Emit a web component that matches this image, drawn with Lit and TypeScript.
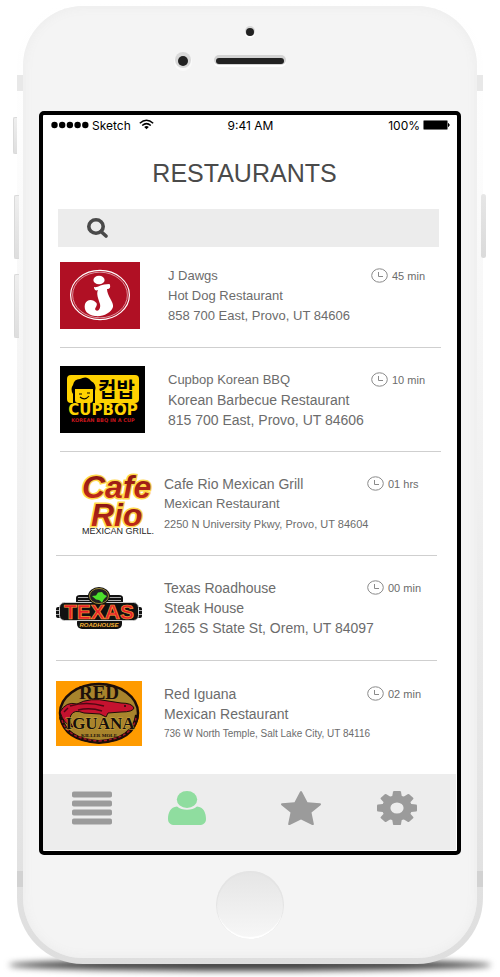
import { LitElement, html, css, svg } from "lit";
import { customElement } from "lit/decorators.js";
import { classMap } from "lit/directives/class-map.js";

const jDawgs = html`<svg class="logo" width="80" height="67" viewBox="0 0 80 67" role="img" aria-label="J Dawgs">
  <rect width="80" height="67" fill="#b01024" />
  <g fill="none" stroke="#fff">
    <ellipse cx="40" cy="33" rx="29.4" ry="24.6" stroke-width="1.2" />
    <ellipse cx="40" cy="33" rx="27.4" ry="22.8" stroke-width=".7" opacity=".8" />
  </g>
  <g fill="#fff">
    <ellipse cx="39" cy="18" rx="5.6" ry="4.3" />
    <path d="M34 25C38 26 40 22 49.500 22C51 25 50 27 47 27C47 34 54 40 53 45C51 51 43 55 35 54C27 53 23.500 48 25 42C27 37 33 37 36.500 41C38 44 34 46 35.500 48C38 50 41 47 40 42C38.500 37 36 32 38 28C36 29 34 28 34 25Z" />
  </g>
</svg>`;

const cupbop = html`<svg class="logo" width="85" height="67" viewBox="0 0 85 67" role="img" aria-label="Cupbop">
  <rect width="85" height="67" fill="#000" />
  <path d="M11 9H75Q79 9 79 13V33Q79 37 75 37H11Q7 37 7 33V13Q7 9 11 9Z" fill="#ffd200" />
  <path d="M13 37V28Q10 23 13 19Q14 13 20 13Q27 9 31 15Q37 18 35 25V37Z" fill="#000" />
  <path d="M15 23H33V34Q33 37 30 37H18Q15 37 15 34Z" fill="#ffd200" />
  <path d="M19 28h3M27 27h3M20 31Q25 35 29 30" fill="none" stroke="#000" stroke-width="1.200" />
  <text x="38" y="31" class="hangul" fill="#000">컵밥</text>
  <text x="43" y="49" class="cup" text-anchor="middle" fill="#ffd200">CUPBOP</text>
  <text x="43" y="56" class="tag" text-anchor="middle" fill="#c4161c">KOREAN BBQ IN A CUP</text>
</svg>`;

const cafeRio = html`<svg class="logo" width="78" height="62" viewBox="0 0 78 62" role="img" aria-label="Cafe Rio">
  <defs>
    <linearGradient id="ember" x1="0" y1="0" x2="0" y2="1">
      <stop offset="0" stop-color="#7c1212" /><stop offset="1" stop-color="#d2301a" />
    </linearGradient>
  </defs>
  <g class="brush" fill="url(#ember)" stroke="#ffd84a" stroke-width="3">
    <text x="2" y="25">Cafe</text>
    <text x="11" y="53">Rio</text>
  </g>
  <text x="38" y="61" class="grill" text-anchor="middle" fill="#222">MEXICAN GRILL.</text>
</svg>`;

const texas = html`<svg class="logo" width="86" height="42" viewBox="0 0 86 42" role="img" aria-label="Texas Roadhouse">
  <path d="M20 16V11Q20 8 24 8H63Q67 8 67 11V16Z" fill="#111" />
  <path d="M22 10.500H65M22 13.500H65" stroke="#aaa" />
  <rect x="0" y="20" width="86" height="11" rx="2" fill="#111" />
  <path d="M0 23.500H86M0 27.500H86" stroke="#aaa" />
  <rect x="21" y="30" width="45" height="12" rx="5" fill="#111" />
  <rect x="3.500" y="15.500" width="79" height="18" rx="5" fill="#111" stroke="#ccc" />
  <ellipse cx="43" cy="9" rx="11" ry="9" fill="#111" />
  <ellipse cx="43" cy="9" rx="9.500" ry="7.600" fill="#222" stroke="#b9a13c" stroke-width=".8" />
  <path d="M36 9L40 8.500L42 5.500L46 5L48 7.500L51 9L48 12L46 15.500L43 13L40 12.500Z" fill="#4be02c" />
  <text x="43" y="32" class="texas" text-anchor="middle" fill="#e8202a" stroke="#f6a13a" stroke-width=".7">TEXAS</text>
  <text x="43" y="40" class="road" text-anchor="middle" fill="#f7b234">ROADHOUSE</text>
</svg>`;

const redIguana = html`<svg class="logo" width="86" height="65" viewBox="0 0 86 65" role="img" aria-label="Red Iguana">
  <rect width="86" height="65" fill="#ff9b00" />
  <ellipse cx="43" cy="32" rx="39" ry="29" fill="#a8842c" stroke="#1c0d08" stroke-width="2.500" />
  <path d="M5 36Q9 59 43 61Q78 59 81 34" fill="none" stroke="#1c0d08" stroke-width="4" />
  <path d="M6 39Q11 58 43 60Q76 58 80 37" fill="none" stroke="#a3142a" stroke-width="1.500" stroke-dasharray="3 2" />
  <text x="43" y="18" class="red" text-anchor="middle" fill="#1c100a">RED</text>
  <path d="M4 31Q10 20 21 23Q34 16 52 20L65 22Q76 22 78 27Q77 31 65 31L52 32L50 36L44 33L28 32Q18 28 15 34Q12 40 17 46Q8 44 4 31Z" fill="#c5122f" stroke="#1c0d08" />
  <path d="M14 25Q30 20 48 25M22 29Q34 26 46 30M8 31L12 27" fill="none" stroke="#4d0712" stroke-width="1.500" />
  <circle cx="69" cy="25" r="1" fill="#1c0d08" />
  <text x="44" y="48" class="iguana" text-anchor="middle" fill="#15100c" stroke="#cda43c" stroke-width="1">IGUANA</text>
  <text x="43" y="56" class="killer" text-anchor="middle" fill="#1c100a">KILLER MOLE</text>
</svg>`;

interface Place {
  name: string;
  kind: string;
  address: string;
  wait: string;
  logo: unknown;
  text: string;
}

const places: Place[] = [
  { name: "J Dawgs", kind: "Hot Dog Restaurant", address: "858 700 East, Provo, UT 84606", wait: "45 min", logo: jDawgs, text: "small" },
  { name: "Cupbop Korean BBQ", kind: "Korean Barbecue Restaurant", address: "815 700 East, Provo, UT 84606", wait: "10 min", logo: cupbop, text: "small-name" },
  { name: "Cafe Rio Mexican Grill", kind: "Mexican Restaurant", address: "2250 N University Pkwy, Provo, UT 84604", wait: "01 hrs", logo: cafeRio, text: "small-kind" },
  { name: "Texas Roadhouse", kind: "Steak House", address: "1265 S State St, Orem, UT 84097", wait: "00 min", logo: texas, text: "regular" },
  { name: "Red Iguana", kind: "Mexican Restaurant", address: "736 W North Temple, Salt Lake City, UT 84116", wait: "02 min", logo: redIguana, text: "tiny-address" },
];

const gearTeeth = [0, 45, 90, 135, 180, 225, 270, 315].map(
  (angle) => svg`<path d="M-5 -12L-4 -19Q-3.800 -20 -2.800 -20H2.800Q3.800 -20 4 -19L5 -12Z" transform="rotate(${angle})" />`,
);

@customElement("app-root")
export class AppRoot extends LitElement {
  static styles = css`
    :host {
      display: block;
      font-family: "Liberation Sans", Arial, sans-serif;
      color: #6c6c6c;
      background: #fff;
    }
    * { box-sizing: border-box; }
    .stage {
      padding: 0 17px 13px;
      overflow: hidden;
    }
    .phone {
      position: relative;
      z-index: 0;
    }
    .shadow {
      position: absolute;
      z-index: -2;
      left: -8px;
      right: -8px;
      bottom: -7px;
      height: 12px;
      border-radius: 50%;
      background: #444;
      filter: blur(3px);
    }
    .shell {
      position: relative;
      padding: 6px;
      border-radius: 66px;
      background: linear-gradient(#fff 0%, #fdfdfd 15%, #dedede 100%);
    }
    .band {
      position: absolute;
      left: 0;
      right: 0;
      height: 16px;
      background: #e8e8e8;
    }
    .band.top { top: 75px; }
    .band.bottom { bottom: 77px; background: #d2d2d2; }
    .key {
      position: absolute;
      z-index: 1;
      width: 5px;
      height: 64px;
      border: 1px solid #dadada;
      border-right-width: 0;
      border-radius: 2px 0 0 2px;
      background: linear-gradient(#efefef, #dedede);
    }
    .mute { left: -4px; top: 117px; width: 4px; height: 37px; }
    .up { left: -3px; top: 195px; }
    .down { left: -3px; top: 274px; }
    .power {
      right: -3px;
      top: 194px;
      border: 0;
      border-radius: 3px;
      background: linear-gradient(#e6e6e6, #dadada);
    }
    .face {
      position: relative;
      padding: 0 16px 19px;
      border-radius: 60px;
      background: #f4f4f4;
      box-shadow: inset 0 0 12px #ebebeb;
    }
    .sensors {
      height: 105px;
      padding-top: 20px;
      display: grid;
      grid-template-columns: 1fr 74px 1fr;
      grid-template-rows: 12px 1fr;
      row-gap: 14px;
      align-items: start;
    }
    .lens, .camera, .speaker {
      background: #222;
      border-radius: 8px;
    }
    .camera {
      grid-column: 2;
      justify-self: center;
      width: 8px;
      height: 8px;
      margin-top: 2px;
      box-shadow: 0 -1px 0 1px #d6d6d6, 0 1px 0 1px #fff;
    }
    .lens {
      grid-row: 2;
      justify-self: end;
      width: 10px;
      height: 10px;
      margin: 4px 25px 0 0;
      box-shadow: 0 -1px 0 3px #d9d9d9, 0 1px 0 4px #fafafa;
    }
    .speaker {
      grid-area: 2 / 2;
      height: 6px;
      margin: 6px 3px 0;
      box-shadow: 0 -1px 0 2px #d3d3d3, 0 1px 0 2px #fff;
    }
    .screen {
      border: 4px solid #000;
      border-radius: 5px;
      background: #fff;
      padding: 0 1px 1px 0;
    }
    .status {
      display: grid;
      grid-template-columns: 1fr auto 1fr;
      align-items: center;
      height: 22px;
      padding: 0 6px 0 8px;
      font: 12px/20px Inter, "Open Sans", sans-serif;
      color: #000;
    }
    .status svg { margin-bottom: 2px; }
    .carrier, .power-level {
      display: flex;
      align-items: center;
      gap: 3px;
    }
    .carrier .wifi { margin-left: 5px; }
    .power-level { justify-content: flex-end; }
    svg { display: block; flex: none; }
    h1 {
      margin: 21px 10px 21px 0;
      font-size: 25px;
      line-height: 30px;
      font-weight: 400;
      text-align: center;
      color: #4a4a4a;
    }
    .search {
      display: flex;
      align-items: center;
      gap: 12px;
      height: 38px;
      margin: 0 17px 0 15px;
      padding: 0 12px 0 29px;
      background: #ececec;
    }
    .search input {
      flex: 1;
      min-width: 0;
      height: 30px;
      border: 0;
      outline: 0;
      background: transparent;
      font: 14px/20px "Liberation Sans", Arial, sans-serif;
      color: #4a4a4a;
    }
    ul {
      list-style: none;
      margin: 0;
      padding: 0;
    }
    .row {
      display: grid;
      grid-template-columns: 108px 1fr;
      align-items: center;
      margin: 0 15px 0 17px;
      padding: 18px 0;
      border-bottom: 1px solid #cfcfcf;
    }
    .row:first-child { padding-top: 15px; }
    .row.wide { margin: 0 19px 0 13px; }
    .row:nth-child(4) { padding-bottom: 19px; }
    .row:last-child {
      padding: 19px 0 27px;
      border-bottom: 0;
    }
    .thumb {
      display: flex;
      align-items: center;
      height: 67px;
    }
    .thumb.end {
      justify-content: flex-end;
      padding-right: 6px;
    }
    .logo { overflow: visible; }
    .info {
      min-width: 0;
      font-size: 14px;
      line-height: 20px;
      white-space: nowrap;
    }
    .info p, .info h2 {
      margin: 0;
      font-size: inherit;
      font-weight: 400;
    }
    .small, .small-name h2, .small-kind .kind { font-size: 13px; }
    .small-kind .address { font-size: 11px; }
    .tiny-address .address { font-size: 10px; }
    .head {
      display: flex;
      justify-content: space-between;
    }
    .wait {
      display: flex;
      align-items: center;
      gap: 4px;
      width: 70px;
      font-size: 11px;
    }
    .tabs {
      display: flex;
      justify-content: space-between;
      height: 76px;
      padding: 17px 39px 0 29px;
      background: #ededed;
    }
    .pair {
      display: flex;
      align-items: flex-start;
      gap: 56px;
    }
    button {
      padding: 0;
      border: 0;
      background: none;
      color: #9b9b9b;
      cursor: pointer;
    }
    button.current { color: #8fdd9f; }
    .home {
      display: block;
      width: 68px;
      height: 68px;
      margin: 16px auto 0;
      border-radius: 50%;
      background: linear-gradient(#e5e5e5, #f7f7f7);
      box-shadow: inset 0 1px 0 1px #e4e4e4, inset 0 -2px 1px #fff;
    }
    .hangul { font: 700 20px "Noto Sans CJK KR", sans-serif; }
    .cup { font: 700 15px "DejaVu Sans", sans-serif; }
    .tag { font: 700 5px "DejaVu Sans", sans-serif; }
    .brush { font: italic 700 32px "Liberation Sans", sans-serif; paint-order: stroke; }
    .grill { font: 9px "Liberation Sans", sans-serif; }
    .texas { font: 700 21px "Liberation Sans", sans-serif; }
    .road { font: italic 700 6px "Liberation Sans", sans-serif; }
    .red { font: 700 19px "Liberation Serif", serif; }
    .iguana { font: 700 17px "Liberation Serif", serif; paint-order: stroke; }
    .killer { font: 700 5px "Liberation Serif", serif; }
  `;

  private row(place: Place, index: number) {
    return html`<li class=${classMap({ row: true, wide: index > 1 })}>
      <div class=${classMap({ thumb: true, end: place.logo === cafeRio })}>${place.logo}</div>
      <div class="info ${place.text}">
        <div class="head">
          <h2>${place.name}</h2>
          <span class="wait">
            <svg width="17" height="15" viewBox="0 0 17 15" fill="none" stroke="#8a8a8a" aria-hidden="true">
              <ellipse cx="8.500" cy="7.500" rx="7.800" ry="6.700" />
              <path d="M7.500 4V8.500H12" />
            </svg>
            ${place.wait}
          </span>
        </div>
        <p class="kind">${place.kind}</p>
        <p class="address">${place.address}</p>
      </div>
    </li>`;
  }

  render() {
    return html`<div class="stage">
      <div class="phone">
        <div class="shadow"></div>
        <div class="shell">
          <div class="band top"></div>
          <div class="band bottom"></div>
          <div class="key mute"></div>
          <div class="key up"></div>
          <div class="key down"></div>
          <div class="key power"></div>
          <div class="face">
            <div class="sensors">
              <div class="camera"></div>
              <div class="lens"></div>
              <div class="speaker"></div>
            </div>
            <main class="screen">
              <div class="status">
                <span class="carrier">
                  <svg width="38" height="8" viewBox="0 0 38 8" aria-hidden="true">
                    ${[0, 1, 2, 3, 4].map((n) => svg`<circle cx=${3.5 + n * 7.7} cy="4" r="3.200" />`)}
                  </svg>
                  Sketch
                  <svg class="wifi" width="15" height="12" viewBox="0 0 15 12" fill="none" stroke="#000" stroke-width="1.500" aria-hidden="true">
                    <path d="M.8 4.200Q7.500 -1.800 14.200 4.200M3.200 6.500Q7.500 2.800 11.800 6.500" />
                    <path d="M5.200 8Q7.500 6.200 9.800 8L7.500 10.200Z" fill="#000" stroke="none" />
                  </svg>
                </span>
                <span>9:41 AM</span>
                <span class="power-level">
                  100%
                  <svg width="27" height="10" viewBox="0 0 27 10" aria-hidden="true">
                    <rect x=".5" y=".5" width="24" height="9" rx="1" stroke="#777" />
                    <path d="M25.500 3.500Q27 5 25.500 6.500Z" stroke="#000" />
                  </svg>
                </span>
              </div>
              <h1>RESTAURANTS</h1>
              <label class="search">
                <svg width="21" height="20" viewBox="0 0 21 20" fill="none" stroke="#4a4a4a" stroke-width="3.600" aria-hidden="true">
                  <ellipse cx="9" cy="8.500" rx="7.200" ry="6.700" />
                  <path d="M14 13.500L19 18" stroke-linecap="round" />
                </svg>
                <input type="search" aria-label="Search restaurants" />
              </label>
              <ul>${places.map((place, index) => this.row(place, index))}</ul>
              <nav class="tabs">
                <div class="pair">
                  <button aria-label="List">
                    <svg width="40" height="34" viewBox="0 0 40 34" fill="currentColor">
                      ${[0, 9, 18, 27].map((y) => svg`<rect y=${y + 0.5} width="40" height="6" rx="1.800" />`)}
                    </svg>
                  </button>
                  <button class="current" aria-label="Profile">
                    <svg width="38" height="34" viewBox="0 0 38 34" fill="currentColor">
                      <ellipse cx="19" cy="8.500" rx="10.200" ry="8.500" />
                      <path d="M9 15.500Q13 18.700 19 18.700T29 15.500C35.500 15.800 38 22 38 28C38 32 35 34 31.500 34H6.500C3 34 0 32 0 28C0 22 2.500 15.800 9 15.500Z" />
                    </svg>
                  </button>
                </div>
                <div class="pair">
                  <button aria-label="Favourites">
                    <svg width="40" height="34" viewBox="0 0 40 34" fill="currentColor">
                      <path d="M19 .8Q20 -.8 21 .8L26.500 11.200L39 12.300Q40.800 12.800 39.500 14.200L30.500 21.500L32.800 32.800Q32.900 34.600 31.200 33.900L20 28.500L8.800 33.900Q7.100 34.600 7.200 32.800L9.500 21.500L.5 14.200Q-.8 12.800 1 12.300L13.500 11.200Z" />
                    </svg>
                  </button>
                  <button aria-label="Settings">
                    <svg width="40" height="34" viewBox="-20 -20 40 40" preserveAspectRatio="none" fill="currentColor">
                      ${gearTeeth}
                      <circle r="10.800" fill="none" stroke="currentColor" stroke-width="8.400" />
                    </svg>
                  </button>
                </div>
              </nav>
            </main>
            <button class="home" aria-label="Home"></button>
          </div>
        </div>
      </div>
    </div>`;
  }
}
